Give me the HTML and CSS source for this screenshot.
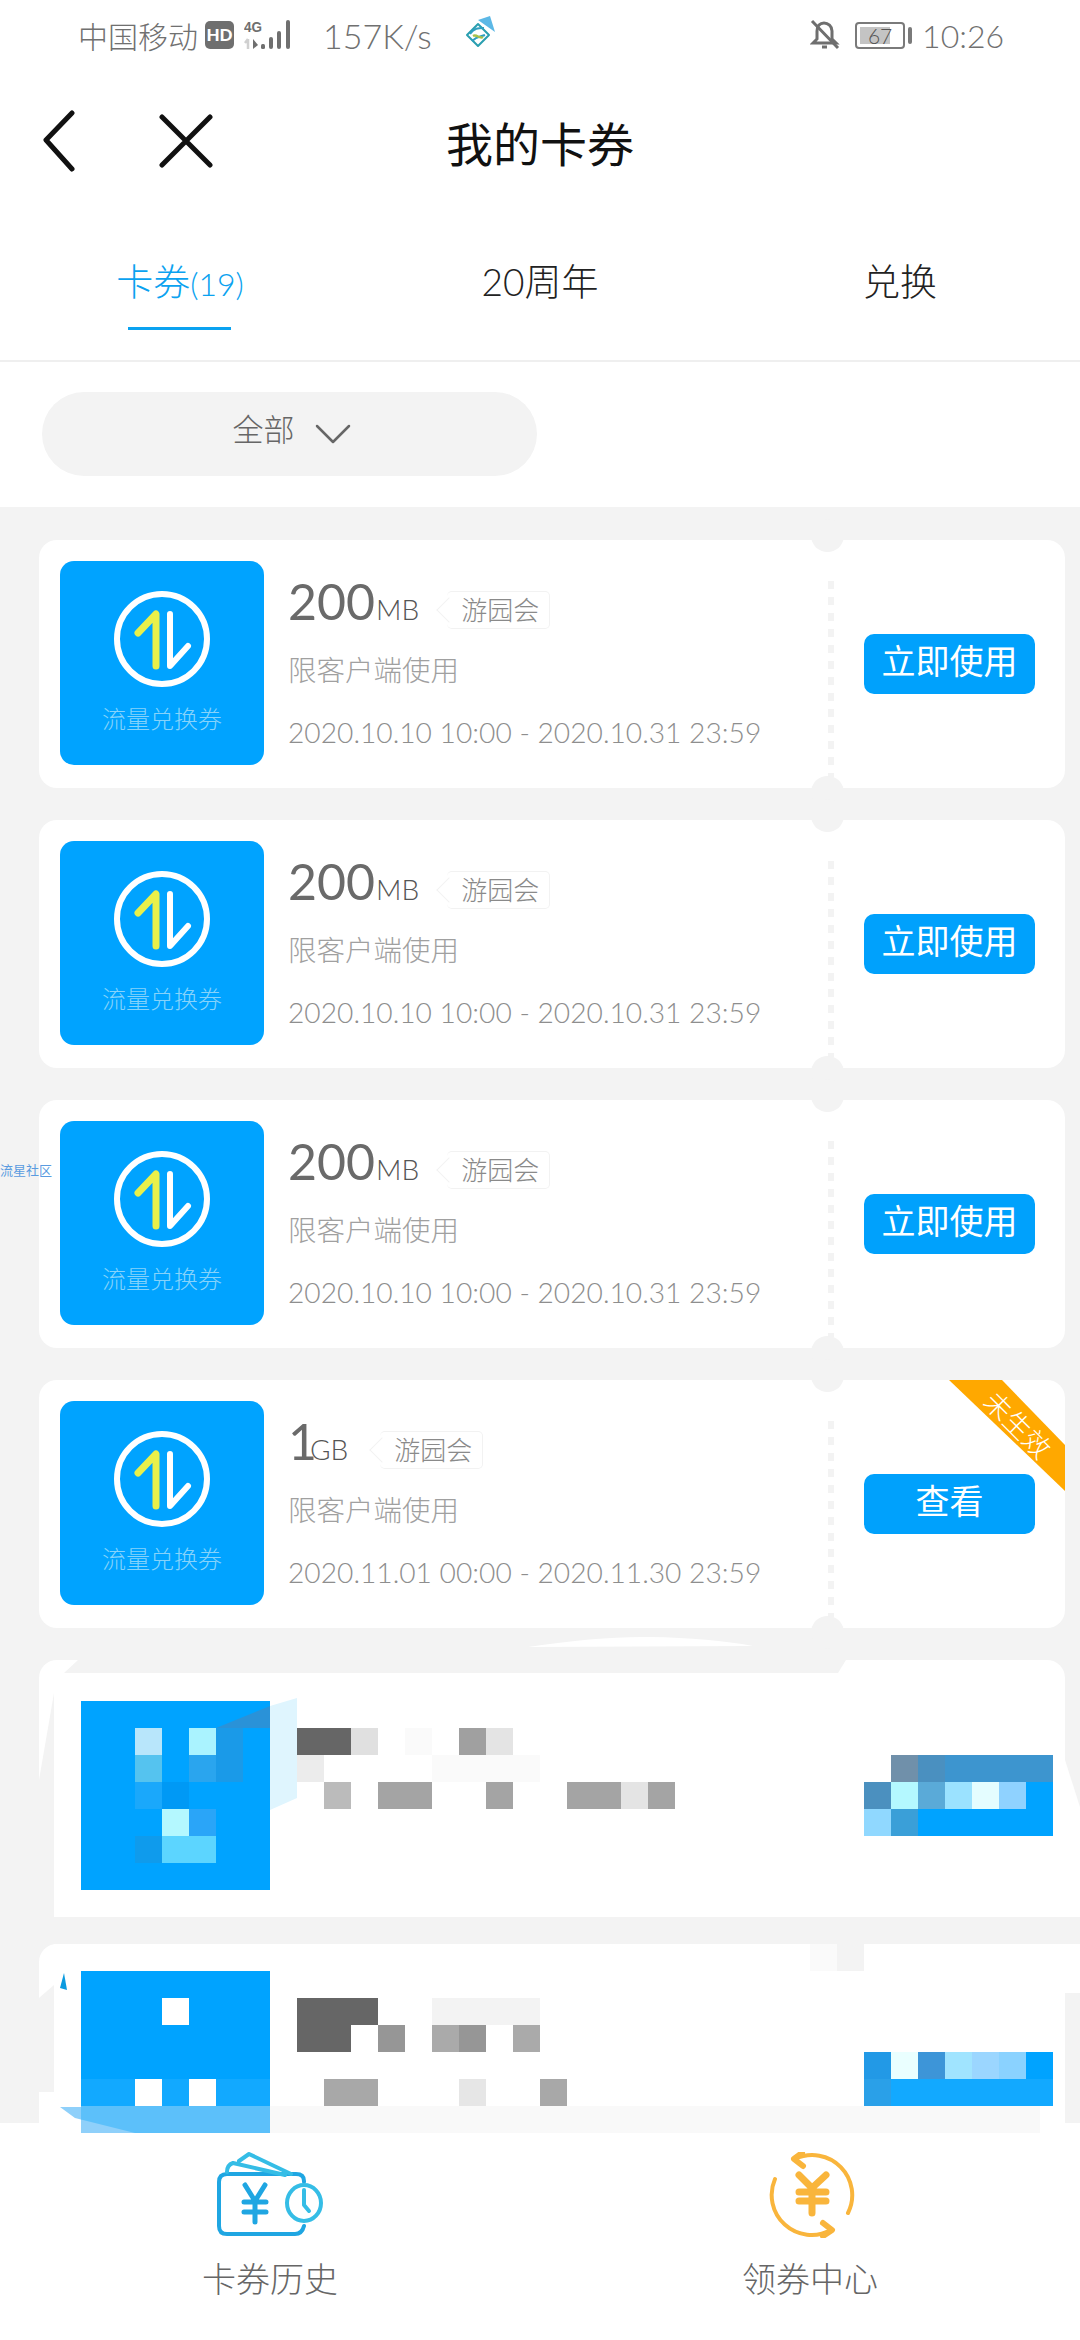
FILE: index.html
```html
<!DOCTYPE html>
<html lang="zh-CN">
<head>
  <meta charset="UTF-8">
  <meta name="viewport" content="width=device-width, initial-scale=1.0">
  <title>我的卡券</title>
  <link rel="stylesheet" href="styles.css">
</head>
<body>
  <div class="page">
    <div class="status-bar">
      <div class="status-left">
        <span class="carrier">中国移动</span>
        <span class="hd">HD</span>
        <svg class="signal" width="50" height="32" viewBox="0 0 50 32">
          <text x="0" y="13" class="signal-label" textLength="18" lengthAdjust="spacingAndGlyphs">4G</text>
          <path d="M4 20v10M1 24l3-4" stroke="#d0d0d0" stroke-width="2.5" fill="none"/>
          <path d="M9 20v10l5-4z" fill="#6f6f6f"/>
          <rect x="17" y="25" width="4" height="5" rx="1.5" fill="#6f6f6f"/>
          <rect x="25" y="18" width="4" height="12" rx="2" fill="#6f6f6f"/>
          <rect x="33" y="12" width="4" height="18" rx="2" fill="#6f6f6f"/>
          <rect x="42" y="1" width="4" height="29" rx="2" fill="#6f6f6f"/>
        </svg>
        <span class="speed">157K/s</span>
        <svg class="mobile-logo" width="30" height="32" viewBox="0 0 30 32">
          <path d="M13 4L25 0l5 16z" fill="#5cb8e6"/>
          <path d="M13 8L24 19L13 30L2 19z" fill="none" stroke="#2a9fb0" stroke-width="2" stroke-linejoin="round"/>
          <path d="M5 18c4-6 8-6 14-6M7 25c5-5 8-4 13-6" fill="none" stroke="#2f9fc0" stroke-width="2"/>
          <path d="M8 20c4-2 6 3 10 1" fill="none" stroke="#a7c24a" stroke-width="2.5"/>
        </svg>
      </div>
      <div class="status-right">
        <svg class="bell" width="30" height="32" viewBox="0 0 30 32" fill="none" stroke="#6f6f6f" stroke-width="3">
          <path d="M7 12c0-5 3-8 7-8s8 3 8 8v8l4 4H3l4-4z"/>
          <path d="M12 28h5M2 2l26 27"/>
        </svg>
        <span class="battery"><span class="battery-fill"></span><span class="battery-num">67</span></span>
        <span class="battery-nub"></span>
        <span class="clock">10:26</span>
      </div>
    </div>

    <div class="nav">
      <svg class="nav-back" width="34" height="62" viewBox="0 0 34 62" fill="none" stroke="#111" stroke-width="5" stroke-linecap="round" stroke-linejoin="round">
        <path d="M30 3L4 30l26 29"/>
      </svg>
      <svg class="nav-close" width="54" height="54" viewBox="0 0 54 54" fill="none" stroke="#111" stroke-width="5" stroke-linecap="round">
        <path d="M3 3l48 48M51 3L3 51"/>
      </svg>
      <div class="nav-title">我的卡券</div>
    </div>

    <div class="tabs">
      <div class="tab active">卡券<span class="tab-count">(19)</span></div>
      <div class="tab">20周年</div>
      <div class="tab">兑换</div>
    </div>

    <div class="filter">
      <div class="filter-pill">
        <span class="filter-text">全部</span>
        <svg width="36" height="22" viewBox="0 0 36 22" fill="none" stroke="#666" stroke-width="2.5" stroke-linecap="round" stroke-linejoin="round">
          <path d="M2 3l16 16L34 3"/>
        </svg>
      </div>
    </div>

    <div class="list">
      <div class="card">
        <div class="thumb">
          <svg width="106" height="106" viewBox="-53 -53 106 106" fill="none" stroke-width="6" stroke-linecap="round" stroke-linejoin="round">
            <circle r="45" stroke="#fff"/>
            <path d="M-24 -6L-6 -25V27" stroke="#e9f04a" stroke-width="7"/>
            <path d="M8 -25V27L26 7" stroke="#fff"/>
          </svg>
          <div class="thumb-label">流量兑换券</div>
        </div>
        <div class="info">
          <div class="info-title">
            <span class="amount">200</span><span class="unit">MB</span>
            <span class="tag">游园会</span>
          </div>
          <div class="info-limit">限客户端使用</div>
          <div class="info-date">2020.10.10 10:00 - 2020.10.31 23:59</div>
        </div>
        <div class="side"><div class="btn">立即使用</div></div>
      </div>

      <div class="card">
        <div class="thumb">
          <svg width="106" height="106" viewBox="-53 -53 106 106" fill="none" stroke-width="6" stroke-linecap="round" stroke-linejoin="round">
            <circle r="45" stroke="#fff"/>
            <path d="M-24 -6L-6 -25V27" stroke="#e9f04a" stroke-width="7"/>
            <path d="M8 -25V27L26 7" stroke="#fff"/>
          </svg>
          <div class="thumb-label">流量兑换券</div>
        </div>
        <div class="info">
          <div class="info-title">
            <span class="amount">200</span><span class="unit">MB</span>
            <span class="tag">游园会</span>
          </div>
          <div class="info-limit">限客户端使用</div>
          <div class="info-date">2020.10.10 10:00 - 2020.10.31 23:59</div>
        </div>
        <div class="side"><div class="btn">立即使用</div></div>
      </div>

      <div class="card">
        <div class="thumb">
          <svg width="106" height="106" viewBox="-53 -53 106 106" fill="none" stroke-width="6" stroke-linecap="round" stroke-linejoin="round">
            <circle r="45" stroke="#fff"/>
            <path d="M-24 -6L-6 -25V27" stroke="#e9f04a" stroke-width="7"/>
            <path d="M8 -25V27L26 7" stroke="#fff"/>
          </svg>
          <div class="thumb-label">流量兑换券</div>
        </div>
        <div class="info">
          <div class="info-title">
            <span class="amount">200</span><span class="unit">MB</span>
            <span class="tag">游园会</span>
          </div>
          <div class="info-limit">限客户端使用</div>
          <div class="info-date">2020.10.10 10:00 - 2020.10.31 23:59</div>
        </div>
        <div class="side"><div class="btn">立即使用</div></div>
      </div>

      <div class="card">
        <div class="thumb">
          <svg width="106" height="106" viewBox="-53 -53 106 106" fill="none" stroke-width="6" stroke-linecap="round" stroke-linejoin="round">
            <circle r="45" stroke="#fff"/>
            <path d="M-24 -6L-6 -25V27" stroke="#e9f04a" stroke-width="7"/>
            <path d="M8 -25V27L26 7" stroke="#fff"/>
          </svg>
          <div class="thumb-label">流量兑换券</div>
        </div>
        <div class="info">
          <div class="info-title">
            <span class="amount amount-single">1</span><span class="unit">GB</span>
            <span class="tag">游园会</span>
          </div>
          <div class="info-limit">限客户端使用</div>
          <div class="info-date">2020.11.01 00:00 - 2020.11.30 23:59</div>
        </div>
        <div class="side"><div class="btn">查看</div></div>
        <div class="ribbon"><span class="ribbon-text">未生效</span></div>
      </div>

      <div class="card card-blurred"></div>
      <div class="card card-blurred"></div>
    </div>

    <div class="footer">
      <div class="footer-item">
        <svg width="106" height="86" viewBox="0 0 106 86" fill="none" stroke="#1fa6e2" stroke-width="4" stroke-linecap="round" stroke-linejoin="round">
          <path d="M87 30v-1q0-7-8-7H10q-8 0-8 8v44q0 8 8 8h68q7 0 9-8"/>
          <path d="M10 20q0-7 6-9l52 12M22 9l10-7 42 20" stroke="#35bde6"/>
          <path d="M28 33l10 16 10-16M38 49v21M27 50h22M27 60h22" stroke-width="5"/>
          <ellipse cx="87" cy="51" rx="17" ry="18" stroke="#35bde6"/>
          <path d="M87 38v15l5 6" stroke="#35bde6"/>
        </svg>
        <div class="footer-label">卡券历史</div>
      </div>
      <div class="footer-item">
        <svg class="coupon-icon" width="86" height="86" viewBox="0 0 86 86" fill="none" stroke="#f9b53c" stroke-width="4" stroke-linecap="round" stroke-linejoin="round">
          <path d="M26 7A40 40 0 0 1 79 61"/>
          <path d="M33 1l-8 6 9 7" stroke-width="6"/>
          <path d="M6 27A40 40 0 0 0 62 78"/>
          <path d="M54 71l9 7-9 6" stroke-width="6"/>
          <path d="M30 23l13 13 14-13M43 36v25M30 40h27M30 49h27" stroke-width="7"/>
        </svg>
        <div class="footer-label">领券中心</div>
      </div>
    </div>

    <div class="float-label">流星社区</div>

    <!-- mosaic and smudges over the two redacted coupons, 27px cells -->
    <svg class="redaction" width="1080" height="2340" viewBox="0 0 1080 2340" shape-rendering="crispEdges">
      <g fill="#f3f3f3">
        <path d="M78 1660L64 1673H838L846 1660z" shape-rendering="auto"/>
        <path d="M39 1780L54 1693V1912H39z" shape-rendering="auto"/>
        <path d="M39 1998L54 1985V2092H39z" shape-rendering="auto"/>
        <path d="M1065 1993h15v130h-15z"/>
      </g>
      <g fill="#fff">
        <path d="M528 1647Q600 1636 650 1637Q710 1638 753 1646z" shape-rendering="auto"/>
        <path d="M1065 1760L1080 1807V1917H1065z" shape-rendering="auto"/>
        <rect x="54" y="1895" width="1011" height="22"/>
        <rect x="54" y="1944" width="27" height="179"/>
        <rect x="1040" y="1944" width="40" height="49"/>
      </g>

      <rect x="81" y="1701" width="189" height="189" fill="#00a3ff"/>
      <path d="M270 1706L297 1698V1798L270 1810z" fill="#dff5fe" shape-rendering="auto"/>
      <path d="M216 1728L270 1706V1728z" fill="#2a92d8" shape-rendering="auto"/>

      <rect x="135" y="1728" width="27" height="27" fill="#b8e6fb"/>
      <rect x="189" y="1728" width="27" height="27" fill="#aaf3ff"/>
      <rect x="216" y="1728" width="27" height="54" fill="#1a9ae8"/>
      <rect x="135" y="1755" width="27" height="27" fill="#55c3ef"/>
      <rect x="189" y="1755" width="27" height="27" fill="#2aa5ee"/>
      <rect x="135" y="1782" width="27" height="27" fill="#1aa8fb"/>
      <rect x="162" y="1782" width="27" height="27" fill="#0099f5"/>
      <rect x="162" y="1809" width="27" height="27" fill="#b4f8ff"/>
      <rect x="189" y="1809" width="27" height="27" fill="#2aa5f8"/>
      <rect x="135" y="1836" width="27" height="27" fill="#0f9bec"/>
      <rect x="162" y="1836" width="54" height="27" fill="#5cd5ff"/>

      <rect x="297" y="1728" width="54" height="27" fill="#666"/>
      <rect x="351" y="1728" width="27" height="27" fill="#e0e0e0"/>
      <rect x="405" y="1728" width="27" height="27" fill="#fafafa"/>
      <rect x="459" y="1728" width="27" height="27" fill="#a0a0a0"/>
      <rect x="486" y="1728" width="27" height="27" fill="#e4e4e4"/>
      <rect x="297" y="1755" width="27" height="27" fill="#ececec"/>
      <rect x="432" y="1755" width="108" height="27" fill="#fafafa"/>
      <rect x="324" y="1782" width="27" height="27" fill="#bbb"/>
      <rect x="378" y="1782" width="54" height="27" fill="#a4a4a4"/>
      <rect x="486" y="1782" width="27" height="27" fill="#a4a4a4"/>
      <rect x="567" y="1782" width="54" height="27" fill="#a4a4a4"/>
      <rect x="621" y="1782" width="27" height="27" fill="#e4e4e4"/>
      <rect x="648" y="1782" width="27" height="27" fill="#a4a4a4"/>

      <rect x="891" y="1755" width="27" height="27" fill="#7090aa"/>
      <rect x="918" y="1755" width="27" height="27" fill="#4a90c0"/>
      <rect x="945" y="1755" width="108" height="27" fill="#3d95cf"/>
      <rect x="864" y="1782" width="27" height="27" fill="#4b90bf"/>
      <rect x="891" y="1782" width="27" height="27" fill="#b4f8ff"/>
      <rect x="918" y="1782" width="27" height="27" fill="#5aaad8"/>
      <rect x="945" y="1782" width="27" height="27" fill="#9be2ff"/>
      <rect x="972" y="1782" width="27" height="27" fill="#e4fdff"/>
      <rect x="999" y="1782" width="27" height="27" fill="#8fd2ff"/>
      <rect x="1026" y="1782" width="27" height="27" fill="#00a3ff"/>
      <rect x="864" y="1809" width="27" height="27" fill="#90d8ff"/>
      <rect x="891" y="1809" width="27" height="27" fill="#3a9fd8"/>
      <rect x="918" y="1809" width="135" height="27" fill="#00a3ff"/>

      <rect x="81" y="1971" width="189" height="108" fill="#00a3ff"/>
      <rect x="81" y="2079" width="189" height="27" fill="#12a9ff"/>
      <rect x="81" y="2106" width="189" height="27" fill="#5cc0fa"/>
      <path d="M60 2107H81V2133H135L75 2118z" fill="#8fd0fa" shape-rendering="auto"/>
      <path d="M64 1973L67 1990L60 1988z" fill="#0a9be0" shape-rendering="auto"/>
      <rect x="270" y="2106" width="770" height="27" fill="#f9f9f9"/>
      <g fill="#fff">
        <rect x="162" y="1998" width="27" height="27"/>
        <rect x="135" y="2079" width="27" height="27"/>
        <rect x="189" y="2079" width="27" height="27"/>
      </g>
      <rect x="297" y="1998" width="81" height="27" fill="#666"/>
      <rect x="432" y="1998" width="108" height="27" fill="#f3f3f3"/>
      <rect x="297" y="2025" width="54" height="27" fill="#666"/>
      <rect x="378" y="2025" width="27" height="27" fill="#969696"/>
      <rect x="432" y="2025" width="27" height="27" fill="#aaa"/>
      <rect x="459" y="2025" width="27" height="27" fill="#969696"/>
      <rect x="513" y="2025" width="27" height="27" fill="#aaa"/>
      <rect x="324" y="2079" width="54" height="27" fill="#a8a8a8"/>
      <rect x="459" y="2079" width="27" height="27" fill="#e6e6e6"/>
      <rect x="540" y="2079" width="27" height="27" fill="#a8a8a8"/>

      <rect x="810" y="1944" width="27" height="27" fill="#fafafa"/>
      <rect x="837" y="1944" width="27" height="27" fill="#f3f3f3"/>
      <rect x="864" y="2052" width="27" height="27" fill="#2299e6"/>
      <rect x="891" y="2052" width="27" height="27" fill="#eaffff"/>
      <rect x="918" y="2052" width="27" height="27" fill="#3d95d8"/>
      <rect x="945" y="2052" width="27" height="27" fill="#a0e4ff"/>
      <rect x="972" y="2052" width="27" height="27" fill="#9bd6ff"/>
      <rect x="999" y="2052" width="27" height="27" fill="#8ad2ff"/>
      <rect x="1026" y="2052" width="27" height="27" fill="#00a3ff"/>
      <rect x="864" y="2079" width="27" height="27" fill="#2aa0e8"/>
      <rect x="891" y="2079" width="162" height="27" fill="#12a9ff"/>
    </svg>
  </div>
</body>
</html>
```

FILE: styles.css
```css
* {
  box-sizing: border-box;
}

body {
  margin: 0;
  font-family: Lato, "Noto Sans CJK SC", sans-serif;
  background-color: #fff;
}

.page {
  position: relative;
  width: 1080px;
  height: 2340px;
  display: flex;
  flex-direction: column;
  overflow: hidden;
}

/* status bar */
.status-bar {
  height: 70px;
  padding: 0 76px 0 78px;
  display: flex;
  justify-content: space-between;
  align-items: center;
  color: #707070;
  flex-shrink: 0;
}

.status-left,
.status-right {
  display: flex;
  align-items: center;
}

.carrier {
  font-size: 30px;
  font-weight: 300;
}

.hd {
  width: 29px;
  height: 28px;
  margin-left: 7px;
  border-radius: 5px;
  background-color: #6f6f6f;
  color: #fff;
  font-size: 17px;
  font-weight: 900;
  line-height: 28px;
  text-align: center;
}

.signal {
  margin-left: 10px;
}

.signal-label {
  font-family: "Liberation Sans", sans-serif;
  font-size: 15px;
  font-weight: bold;
  fill: #6f6f6f;
}

.speed {
  margin-left: 29px;
  font-size: 34px;
  font-weight: 300;
}

.mobile-logo {
  margin-left: 33px;
  margin-top: -6px;
}

.bell {
  margin-right: 15px;
}

.battery {
  position: relative;
  width: 50px;
  height: 27px;
  border: 2px solid #7a7a7a;
  border-radius: 4px;
  padding: 3px;
}

.battery-fill {
  display: block;
  width: 30px;
  height: 17px;
  background-color: #c4c4c4;
}

.battery-num {
  position: absolute;
  left: 0;
  right: 0;
  top: 0;
  text-align: center;
  font-size: 21px;
  line-height: 23px;
  font-weight: 300;
  color: #555;
}

.battery-nub {
  width: 4px;
  height: 17px;
  margin: 0 10px 0 3px;
  border-radius: 2px;
  background-color: #7a7a7a;
}

.clock {
  font-size: 32px;
  font-weight: 300;
}

/* nav */
.nav {
  position: relative;
  height: 142px;
  display: flex;
  align-items: center;
  padding-left: 42px;
  flex-shrink: 0;
}

.nav-close {
  margin-left: 83px;
}

.nav-title {
  position: absolute;
  left: 0;
  right: 0;
  text-align: center;
  font-size: 47px;
  color: #111;
}

/* tabs */
.tabs {
  height: 150px;
  display: grid;
  grid-template-columns: 1fr 1fr 1fr;
  border-bottom: 2px solid #efefef;
  flex-shrink: 0;
}

.tab {
  position: relative;
  padding-top: 48px;
  text-align: center;
  font-size: 37px;
  line-height: 44px;
  font-weight: 300;
  color: #222;
}

.tab.active {
  color: #0aa2f0;
}

.tab.active::after {
  content: "";
  position: absolute;
  left: 128px;
  width: 103px;
  top: 115px;
  height: 3px;
  background-color: #0aa2f0;
}

.tab-count {
  font-size: 32px;
}

/* filter */
.filter {
  height: 145px;
  padding: 30px 0 0 42px;
  flex-shrink: 0;
}

.filter-pill {
  width: 495px;
  height: 84px;
  padding-left: 4px;
  border-radius: 42px;
  background-color: #f3f3f3;
  display: flex;
  justify-content: center;
  align-items: center;
  gap: 20px;
  font-size: 31px;
  font-weight: 300;
  color: #666;
}

.filter-text {
  margin-bottom: 14px;
}

/* coupon list */
.list {
  flex: 1;
  min-height: 0;
  overflow: hidden;
  padding: 33px 15px 0 39px;
  background-color: #f3f3f3;
  display: flex;
  flex-direction: column;
  gap: 32px;
}

.card {
  position: relative;
  height: 248px;
  flex-shrink: 0;
  padding: 21px 0 0 21px;
  display: flex;
  border-radius: 18px;
  background-color: #fff;
}

.card:not(.card-blurred)::before,
.card:not(.card-blurred)::after {
  content: "";
  position: absolute;
  left: 772px;
  width: 33px;
  height: 33px;
  border-radius: 50%;
  background-color: #f3f3f3;
}

.card::before {
  top: -21px;
}

.card::after {
  bottom: -21px;
}

.card-blurred {
  height: 252px;
}

.thumb {
  width: 204px;
  height: 204px;
  padding-top: 25px;
  border-radius: 14px;
  background-color: #00a3ff;
  display: flex;
  flex-direction: column;
  align-items: center;
  flex-shrink: 0;
}

.thumb-label {
  margin-top: 11px;
  font-size: 24px;
  line-height: 32px;
  font-weight: 300;
  color: #86d3fb;
}

.info {
  width: 564px;
  padding: 11px 0 0 24px;
  flex-shrink: 0;
  color: #a0a0a0;
}

.info-title {
  display: flex;
  align-items: baseline;
  height: 58px;
}

.amount {
  font-size: 50px;
  line-height: 58px;
  color: #6a6a6a;
}

.amount-single {
  letter-spacing: -8px;
}

.unit {
  margin-left: 1px;
  font-size: 28px;
  font-weight: 300;
  color: #555;
}

.tag {
  position: relative;
  margin-left: 28px;
  padding: 0 10px 0 14px;
  height: 38px;
  font-size: 26px;
  line-height: 36px;
  font-weight: 300;
  color: #8a8a8a;
  border: 1px solid #f2f2f2;
  border-left: none;
  border-radius: 5px;
}

.amount-single ~ .tag {
  margin-left: 32px;
}

.tag::before {
  content: "";
  position: absolute;
  left: -7px;
  top: 9px;
  width: 17px;
  height: 17px;
  border-left: 1px solid #f2f2f2;
  border-bottom: 1px solid #f2f2f2;
  transform: rotate(45deg);
}

.info-limit {
  margin-top: 20px;
  font-size: 28.5px;
  line-height: 40px;
  font-weight: 300;
}

.info-date {
  margin-top: 24px;
  font-size: 28.2px;
  line-height: 36px;
  font-weight: 300;
  color: #8e8e8e;
  white-space: nowrap;
}

.side {
  position: relative;
  flex: 1;
  margin-top: 20px;
  height: 196px;
  padding: 53px 0 0 36px;
  background: repeating-linear-gradient(#f3f3f3 0 8px, transparent 8px 16px) left top / 6px 100% no-repeat;
}

.btn {
  width: 171px;
  height: 60px;
  border-radius: 10px;
  background-color: #00a1fc;
  color: #fff;
  font-size: 34px;
  line-height: 54px;
  text-align: center;
}

.ribbon {
  position: absolute;
  top: 0;
  right: 0;
  width: 116px;
  height: 111px;
  background-color: #ffa800;
  clip-path: polygon(0 0, 53px 0, 116px 65px, 116px 111px);
}

.ribbon-text {
  position: absolute;
  left: 28px;
  top: 30px;
  font-size: 27px;
  line-height: 30px;
  font-weight: 300;
  color: #fff;
  transform: rotate(45deg);
  white-space: nowrap;
}

/* footer */
.footer {
  height: 217px;
  flex-shrink: 0;
  display: grid;
  grid-template-columns: 1fr 1fr;
  background-color: #fff;
}

.footer-item {
  padding-top: 29px;
  display: flex;
  flex-direction: column;
  align-items: center;
}

.coupon-icon {
  margin-left: 3px;
}

.footer-label {
  margin-top: 19px;
  font-size: 34px;
  line-height: 44px;
  font-weight: 300;
  color: #666;
}

/* overlays */
.float-label {
  position: absolute;
  left: 0;
  top: 1161px;
  font-size: 13px;
  line-height: 18px;
  color: #5a9be0;
}

.redaction {
  position: absolute;
  left: 0;
  top: 0;
  pointer-events: none;
}
```
